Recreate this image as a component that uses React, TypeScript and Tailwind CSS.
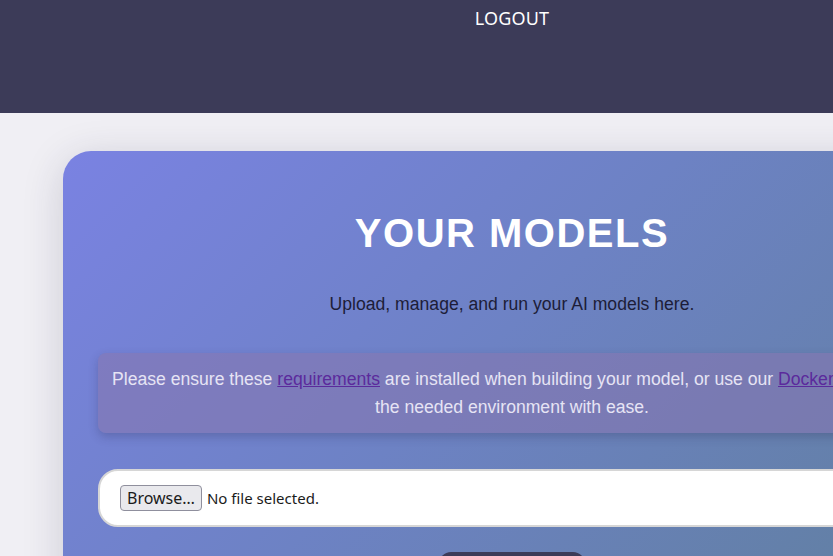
import { useState } from 'react';

const App = () => {
    const [fileName] = useState<string | null>(null);

    return (
        <div className="w-[1024px] min-h-screen bg-[#f0eff4] font-['Liberation_Sans',Arial,sans-serif]">
            <header className="h-[113px] bg-[#3c3b58] flex justify-center pt-[6px]">
                <a className="text-white text-[18px] leading-[24px] font-['Noto_Sans',sans-serif] tracking-[0.2px] cursor-pointer">
                    LOGOUT
                </a>
            </header>

            <main className="px-[63px] pt-[38px] pb-10">
                <section className="rounded-[28px] bg-[linear-gradient(135deg,#7a82e2_0%,#6d82c4_45%,#5f7f9c_100%)] shadow-[0_8px_40px_rgba(40,40,70,0.18)] px-[35px] pt-[58px] pb-10">
                    <h1 className="text-center text-white text-[40px] leading-[48px] font-bold tracking-[1.5px]">
                        YOUR MODELS
                    </h1>
                    <p className="mt-[33px] text-center text-[17.6px] leading-[28px] text-[#1d1d38]">
                        Upload, manage, and run your AI models here.
                    </p>

                    <div className="mt-[35px] rounded-[8px] bg-[#8576b0]/60 shadow-[0_4px_10px_rgba(40,40,80,0.25)] py-3 px-[8px] text-center text-[17.6px] leading-[28px] text-[#e6e4f4]">
                        Please ensure these{' '}
                        <a className="text-[#5b2a9c] underline cursor-pointer">requirements</a> are installed when
                        building your model, or use our{' '}
                        <a className="text-[#5b2a9c] underline cursor-pointer">Docker image</a> for the needed
                        environment with ease.
                    </div>

                    <label className="mt-[36px] h-[58px] flex items-center gap-[5px] rounded-[20px] bg-white border-2 border-[#d6d6d6] pl-[20px] font-['Noto_Sans',sans-serif] text-[15px] text-[#1b1b1b] cursor-pointer">
                        <span className="h-[26px] px-[6px] flex items-center rounded-[4px] border border-[#8f8f9d] bg-[#e9e9ed] text-[16px]">
                            Browse…
                        </span>
                        <span>{fileName ?? 'No file selected.'}</span>
                    </label>

                    <div className="mt-[25px] flex justify-center">
                        <button className="w-[146px] h-[44px] rounded-[12px] bg-[#3c3b58] text-white text-[16px] font-bold">
                            UPLOAD
                        </button>
                    </div>
                </section>
            </main>
        </div>
    );
};

export default App;
